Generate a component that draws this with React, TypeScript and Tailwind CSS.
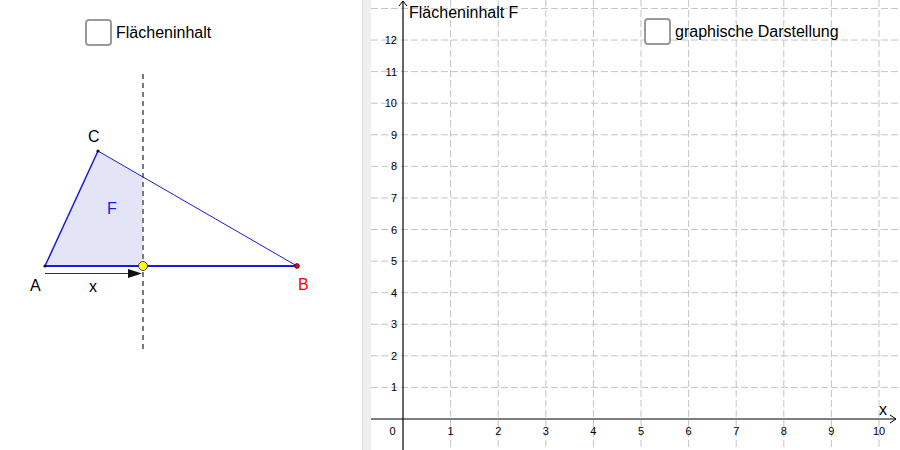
import React from 'react';

const font = '"Liberation Sans", Arial, sans-serif';

const ORIGIN_X = 403;
const ORIGIN_Y = 419;
const UNIT_X = 47.6;
const UNIT_Y = 31.58;

const xTicks = [1, 2, 3, 4, 5, 6, 7, 8, 9, 10];
const yTicks = [1, 2, 3, 4, 5, 6, 7, 8, 9, 10, 11, 12];

function Checkbox({ label }: { label: string }) {
  return (
    <div className="flex items-center gap-[4px]">
      <div className="h-[27px] w-[27px] rounded-[4px] border-2 border-[#9a9a9a] bg-white" />
      <span className="text-[16px] leading-none text-black" style={{ fontFamily: font }}>
        {label}
      </span>
    </div>
  );
}

function Construction() {
  // A, B, C and the moving point P on AB
  const A = { x: 45, y: 266 };
  const B = { x: 297, y: 266 };
  const C = { x: 98, y: 151 };
  const px = 143;
  const t = (px - C.x) / (B.x - C.x);
  const cutY = C.y + t * (B.y - C.y);

  return (
    <svg className="absolute inset-0" width={362} height={450} viewBox="0 0 362 450">
      <polygon
        points={`${A.x},${A.y} ${C.x},${C.y} ${px},${cutY} ${px},${A.y}`}
        fill="#e4e4f7"
        stroke="none"
      />
      <line x1={px} y1={74} x2={px} y2={350} stroke="#7a7a7a" strokeWidth={2} strokeDasharray="5 4" />
      <line x1={A.x} y1={A.y} x2={C.x} y2={C.y} stroke="#1a1ae0" strokeWidth={1.5} />
      <line x1={C.x} y1={C.y} x2={B.x} y2={B.y} stroke="#1a1ae0" strokeWidth={1} />
      <line x1={A.x} y1={A.y} x2={B.x} y2={B.y} stroke="#1a1ae0" strokeWidth={1.8} />

      {/* vector x */}
      <line x1={A.x} y1={273.5} x2={129} y2={273.5} stroke="#333" strokeWidth={1.2} />
      <polygon points="128,269 142,273.5 128,278" fill="#111" />

      <circle cx={A.x} cy={A.y} r={1.6} fill="#111" />
      <circle cx={C.x} cy={C.y} r={1.6} fill="#111" />
      <circle cx={B.x} cy={B.y} r={2.4} fill="#e01010" stroke="#400" strokeWidth={0.8} />
      <circle cx={px} cy={A.y} r={4.5} fill="#ffff00" stroke="#444" strokeWidth={1} />

      <g fontFamily={font} fontSize={16}>
        <text x={88} y={142} fill="#000">C</text>
        <text x={30} y={291} fill="#000">A</text>
        <text x={298} y={289.5} fill="#ff0000">B</text>
        <text x={107} y={214} fill="#1a1ae0">F</text>
        <text x={89} y={292} fill="#000">x</text>
      </g>
    </svg>
  );
}

function Graph() {
  const gridX = xTicks.map((k) => ORIGIN_X + k * UNIT_X);
  const gridY = [...yTicks, 13].map((k) => ORIGIN_Y - k * UNIT_Y);

  return (
    <svg className="absolute inset-0" width={529} height={450} viewBox="371 0 529 450">
      <g stroke="#c4c4c4" strokeWidth={1} strokeDasharray="7 3">
        {gridX.map((x) => (
          <line key={`gx${x}`} x1={x} y1={0} x2={x} y2={450} />
        ))}
        {gridY.map((y) => (
          <line key={`gy${y}`} x1={371} y1={y} x2={900} y2={y} />
        ))}
      </g>

      {/* axes */}
      <line x1={371} y1={ORIGIN_Y} x2={896} y2={ORIGIN_Y} stroke="#000" strokeWidth={1.2} />
      <line x1={ORIGIN_X} y1={1} x2={ORIGIN_X} y2={450} stroke="#000" strokeWidth={1.2} />
      <polyline points="890,415 896,419 890,423" fill="none" stroke="#000" strokeWidth={1} />
      <polyline points="399,6 403,1 407,6" fill="none" stroke="#000" strokeWidth={1} />

      <g fontFamily={font} fontSize={11} fill="#000">
        {xTicks.map((k) => (
          <text key={`lx${k}`} x={ORIGIN_X + k * UNIT_X} y={434.5} textAnchor="middle">
            {k}
          </text>
        ))}
        {yTicks.map((k) => (
          <text key={`ly${k}`} x={397} y={ORIGIN_Y - k * UNIT_Y + 4} textAnchor="end">
            {k}
          </text>
        ))}
        <text x={395.5} y={434.5} textAnchor="end">0</text>
      </g>

      <g fontFamily={font} fontSize={16} fill="#000">
        <text x={409} y={18}>Flächeninhalt F</text>
        <text x={879} y={414.5}>x</text>
      </g>
    </svg>
  );
}

export default function App() {
  return (
    <div className="flex h-[450px] w-[900px] overflow-hidden bg-white">
      <div className="relative h-full w-[362px] shrink-0 bg-white">
        <Construction />
        <div className="absolute left-[85px] top-[19px]">
          <Checkbox label="Flächeninhalt" />
        </div>
      </div>
      <div className="h-full w-[9px] shrink-0 border-l border-[#dedede] bg-[#efefef]" />
      <div className="relative h-full flex-1 bg-white">
        <Graph />
        <div className="absolute left-[273px] top-[18px]">
          <Checkbox label="graphische Darstellung" />
        </div>
      </div>
    </div>
  );
}
